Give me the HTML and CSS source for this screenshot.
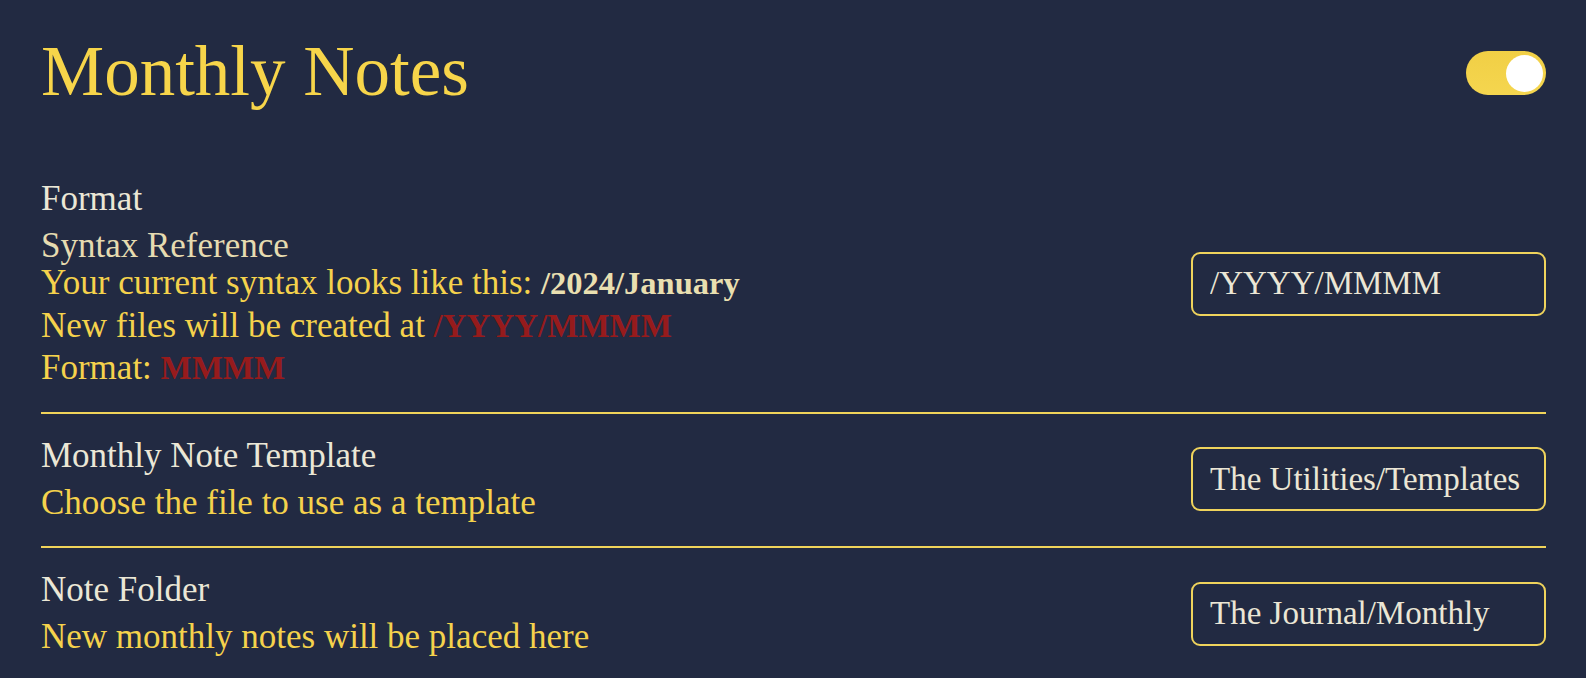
FILE: index.html
```html
<!DOCTYPE html>
<html lang="en">
<head>
<meta charset="utf-8">
<title>Monthly Notes</title>
<link rel="stylesheet" href="styles.css">
</head>
<body>
<div class="page">
  <header class="header">
    <h1 class="title">Monthly Notes</h1>
    <div class="toggle is-on"><div class="toggle-knob"></div></div>
  </header>

  <div class="setting-item">
    <div class="setting-info">
      <div class="setting-name">Format</div>
      <div class="setting-desc">
        <div class="syntax-ref">Syntax Reference</div>
        <div class="desc-line">Your current syntax looks like this: <b class="sample">/2024/January</b></div>
        <div class="desc-line">New files will be created at <span class="accent">/YYYY/MMMM</span></div>
        <div class="desc-line">Format: <span class="accent">MMMM</span></div>
      </div>
    </div>
    <div class="setting-control">
      <input class="text-input" type="text" value="/YYYY/MMMM">
    </div>
  </div>

  <div class="setting-item">
    <div class="setting-info">
      <div class="setting-name">Monthly Note Template</div>
      <div class="setting-desc">
        <div class="desc-line">Choose the file to use as a template</div>
      </div>
    </div>
    <div class="setting-control">
      <input class="text-input" type="text" value="The Utilities/Templates">
    </div>
  </div>

  <div class="setting-item">
    <div class="setting-info">
      <div class="setting-name">Note Folder</div>
      <div class="setting-desc">
        <div class="desc-line">New monthly notes will be placed here</div>
      </div>
    </div>
    <div class="setting-control">
      <input class="text-input" type="text" value="The Journal/Monthly">
    </div>
  </div>
</div>
</body>
</html>
```

FILE: styles.css
```css
html, body {
  margin: 0;
  padding: 0;
  background: #222a42;
}

body {
  font-family: "Liberation Serif", "Times New Roman", serif;
  color: #ebe6d5;
}

.page {
  padding: 0 40px 0 41px;
}

.header {
  display: flex;
  justify-content: space-between;
  align-items: flex-start;
  padding-top: 36px;
  margin-bottom: 51px;
}

.title {
  margin: 0;
  font-size: 71px;
  line-height: 71px;
  font-weight: normal;
  color: #f7d54a;
}

.toggle {
  width: 80px;
  height: 44px;
  border-radius: 22px;
  background: linear-gradient(180deg, #f1cf45 0%, #f5d64f 100%);
  margin-top: 15px;
  display: flex;
  align-items: center;
  justify-content: flex-end;
  padding: 0 3px;
  box-sizing: border-box;
}

.toggle-knob {
  width: 37px;
  height: 37px;
  border-radius: 50%;
  background: #ffffff;
}

.setting-item {
  display: flex;
  align-items: center;
  justify-content: space-between;
  padding: 20px 0 22px;
  border-bottom: 2px solid #f0d35a;
}

.setting-item + .setting-item {
  padding-top: 21px;
}

.setting-item:last-child {
  border-bottom: none;
}

.setting-name {
  font-size: 35px;
  line-height: 42px;
  color: #ebe7d6;
  margin-bottom: 5px;
}

.setting-desc {
  font-size: 35px;
  line-height: 42.5px;
  color: #f5d24c;
}

.syntax-ref {
  color: #e6dbb0;
  line-height: 33px;
  margin-top: 9px;
}

.sample {
  color: #e9dfb0;
  font-weight: bold;
  font-size: 32.5px;
}

.accent {
  color: #961b1c;
  font-weight: bold;
  font-size: 33px;
}

.text-input {
  width: 355px;
  height: 64px;
  box-sizing: border-box;
  border: 2px solid #efd35c;
  border-radius: 9px;
  background: transparent;
  color: #ebe6d5;
  font-family: "Liberation Serif", "Times New Roman", serif;
  font-size: 33px;
  padding: 0 0 0 17px;
  outline: none;
  display: block;
}
```
